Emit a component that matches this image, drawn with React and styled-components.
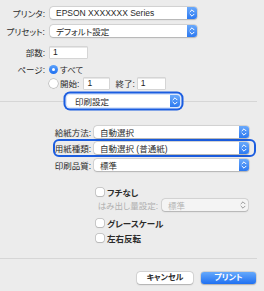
import React from 'react';
import styled, {createGlobalStyle} from 'styled-components';

const Global = createGlobalStyle`
  html, body {
    margin: 0;
    padding: 0;
    background: #ececec;
  }
  body {
    font-family: "Liberation Sans", "Noto Sans CJK JP", sans-serif;
    font-feature-settings: "palt";
  }
`

const Dialog = styled.div`
  width: 264px;
  height: 291px;
  box-sizing: border-box;
  padding-top: 7px;
  background: #ececec;
  color: #2a2a2a;
  font-size: 8.5px;
  overflow: hidden;
`

const Row = styled.div`
  position: relative;
  display: flex;
  align-items: center;
  height: 12px;
  margin-top: ${p => p.mt || 0}px;
  padding-left: ${p => p.pl || 0}px;
  ${p => p.ring && `
    &::after {
      content: "";
      position: absolute;
      left: 53px;
      right: 8px;
      top: -3px;
      bottom: -3px;
      border: 2px solid #1b5de0;
      border-radius: 6px;
      box-sizing: border-box;
    }
  `}
`

const Label = styled.div`
  width: ${p => p.w}px;
  margin-right: ${p => p.gap ?? 5}px;
  flex-shrink: 0;
  text-align: right;
  white-space: nowrap;
  color: ${p => p.disabled ? '#b0b0b0' : '#2a2a2a'};
`

const Text = styled.span`
  margin-left: ${p => p.ml || 0}px;
  white-space: nowrap;
  font-weight: ${p => p.bold ? 700 : 400};
  color: #2a2a2a;
`

const Popup = styled.div`
  position: relative;
  z-index: 1;
  display: flex;
  align-items: center;
  width: ${p => p.w}px;
  height: 12px;
  box-sizing: border-box;
  padding-left: ${p => p.pad || 6}px;
  flex-shrink: 0;
  background: ${p => p.disabled ? '#f4f4f4' : '#fff'};
  color: ${p => p.disabled ? '#b5b5b5' : '#2a2a2a'};
  border-radius: 3px;
  white-space: nowrap;
  box-shadow: ${p => p.focus
    ? '0 0 0 1.5px #dce7fa, 0 0 0 3.5px #1b5de0'
    : '0 0 0 0.5px rgba(0,0,0,0.16), 0 0.5px 1.5px rgba(0,0,0,0.18)'};
`

const Stepper = styled.div`
  display: flex;
  align-items: center;
  justify-content: center;
  margin-left: auto;
  width: 10px;
  height: 100%;
  border-radius: 0 3px 3px 0;
  background: ${p => p.disabled ? 'transparent' : 'linear-gradient(#6aa9fb, #2c79f1)'};
`

const Field = styled.input`
  width: ${p => p.w}px;
  height: 11px;
  box-sizing: border-box;
  margin: 0 0 0 ${p => p.ml || 0}px;
  padding: 0 0 0 3px;
  border: none;
  outline: none;
  background: #fff;
  box-shadow: 0 0 0 0.5px #bdbdbd, inset 0 0.5px 0 #d0d0d0;
  font-family: inherit;
  font-size: 8.5px;
  color: #222;
`

const Radio = styled.div`
  width: 9px;
  height: 9px;
  box-sizing: border-box;
  border-radius: 50%;
  flex-shrink: 0;
  display: flex;
  align-items: center;
  justify-content: center;
  background: ${p => p.on ? 'linear-gradient(#5da2fb, #1e6ff0)' : '#fff'};
  box-shadow: ${p => p.on ? 'none' : '0 0 0 0.5px #a8a8a8, 0 0.5px 1px rgba(0,0,0,0.15)'};
  &::after {
    content: "";
    width: 3px;
    height: 3px;
    border-radius: 50%;
    background: ${p => p.on ? '#fff' : 'transparent'};
  }
`

const Check = styled.div`
  width: 8px;
  height: 8px;
  border-radius: 2px;
  flex-shrink: 0;
  background: #fff;
  box-shadow: 0 0 0 0.5px #a8a8a8, 0 0.5px 1px rgba(0,0,0,0.15);
  margin-right: 3px;
`

const Divider = styled.div`
  display: flex;
  align-items: center;
  height: 12px;
  margin-top: ${p => p.mt || 0}px;
`

const Line = styled.div`
  width: ${p => p.w}px;
  height: 1px;
  flex-shrink: 0;
  margin-top: ${p => p.mt || 0}px;
  background: #d6d6d6;
`

const Buttons = styled.div`
  display: flex;
  justify-content: flex-end;
  gap: 8px;
  margin-top: 13px;
  padding-right: 8px;
`

const Button = styled.div`
  width: ${p => p.w}px;
  height: 12px;
  line-height: 12px;
  text-align: center;
  border-radius: 3px;
  font-size: 8px;
  font-weight: 700;
  color: ${p => p.primary ? '#fff' : '#2a2a2a'};
  background: ${p => p.primary ? 'linear-gradient(#66a9fb, #1f70f1)' : '#fff'};
  box-shadow: 0 0 0 0.5px rgba(0,0,0,0.15), 0 0.5px 1.5px rgba(0,0,0,0.2);
`

function Arrows({disabled}) {
  return (
    <svg width="10" height="12" viewBox="0 0 10 12">
      <path d="M3 4.8 L5 2.8 L7 4.8 M3 7.2 L5 9.2 L7 7.2" fill="none"
        stroke={disabled ? '#9a9a9a' : '#fff'} strokeWidth="1" strokeLinecap="round" strokeLinejoin="round" />
    </svg>
  )
}

function Select({w, children, focus, disabled, pad}) {
  return (
    <Popup w={w} focus={focus} disabled={disabled} pad={pad}>
      {children}
      <Stepper disabled={disabled}><Arrows disabled={disabled} /></Stepper>
    </Popup>
  )
}

export default function App() {
  return (
    <Dialog>
      <Global />
      <Row>
        <Label w={45}>プリンタ:</Label>
        <Select w={147}>EPSON XXXXXXX Series</Select>
      </Row>
      <Row mt={6}>
        <Label w={45}>プリセット:</Label>
        <Select w={147}>デフォルト設定</Select>
      </Row>
      <Row mt={9}>
        <Label w={45}>部数:</Label>
        <Field w={37} value="1" readOnly />
      </Row>
      <Row mt={5}>
        <Label w={45} gap={4}>ページ:</Label>
        <Radio on />
        <Text ml={2}>すべて</Text>
      </Row>
      <Row mt={2} pl={49}>
        <Radio />
        <Text ml={2}>開始:</Text>
        <Field w={25} ml={5} value="1" readOnly />
        <Text ml={6}>終了:</Text>
        <Field w={27} ml={3} value="1" readOnly />
      </Row>
      <Divider mt={6}>
        <Line w={67} />
        <Select w={113} focus pad={8}>印刷設定</Select>
        <Line w={77} />
      </Divider>

      <Row mt={19}>
        <Label w={91} gap={3}>給紙方法:</Label>
        <Select w={155}>自動選択</Select>
      </Row>
      <Row mt={4} ring>
        <Label w={91} gap={3}>用紙種類:</Label>
        <Select w={155}>自動選択 (普通紙)</Select>
      </Row>
      <Row mt={5}>
        <Label w={91} gap={3}>印刷品質:</Label>
        <Select w={155}>標準</Select>
      </Row>
      <Row mt={15} pl={96}>
        <Check />
        <Text bold>フチなし</Text>
      </Row>
      <Row mt={1}>
        <Label w={158} gap={4} disabled>はみ出し量設定:</Label>
        <Select w={86} disabled>標準</Select>
      </Row>
      <Row mt={6} pl={96}>
        <Check />
        <Text bold>グレースケール</Text>
      </Row>
      <Row mt={3} pl={96}>
        <Check />
        <Text bold>左右反転</Text>
      </Row>
      <Line w={257} mt={14} />
      <Buttons>
        <Button w={56}>キャンセル</Button>
        <Button w={55} primary>プリント</Button>
      </Buttons>
    </Dialog>
  );
}
